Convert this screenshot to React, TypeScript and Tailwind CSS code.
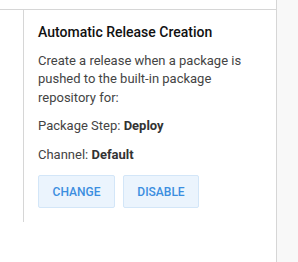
export default function App() {
  return (
    <div className="flex h-[262px] w-[298px] bg-white" style={{ fontFamily: "Roboto, 'Liberation Sans', sans-serif" }}>
      <div className="flex w-[277px] flex-col border-r border-[#d6d6d6]">
        <div className="h-[10px] border-b border-[#d6d6d6]" />
        <div className="flex">
          <div className="w-[23px]" />
          <div className="w-[253px] border-l border-[#d6d6d6] pl-[14px] pr-[24px] pt-[11px] pb-[14px]">
            <h2 className="text-[14px] leading-[22px] font-medium text-[#111]">Automatic Release Creation</h2>
            <p className="mt-[9px] text-[13px] leading-[18.3px] text-[#444]">
              Create a release when a package is pushed to the built-in package repository for:
            </p>
            <p className="mt-[10px] text-[13px] leading-[18.3px] text-[#444]">
              Package Step: <span className="font-bold text-[#333]">Deploy</span>
            </p>
            <p className="mt-[11px] text-[13px] leading-[18.3px] text-[#444]">
              Channel: <span className="font-bold text-[#333]">Default</span>
            </p>
            <div className="mt-[11px] flex gap-[8px]">
              <button className="h-[33px] w-[77px] rounded-[2px] border border-[#d3e6f8] bg-[#ebf4fd] text-[12px] font-medium text-[#3b8ee0]">
                CHANGE
              </button>
              <button className="h-[33px] w-[76px] rounded-[2px] border border-[#d3e6f8] bg-[#ebf4fd] text-[12px] font-medium text-[#3b8ee0]">
                DISABLE
              </button>
            </div>
          </div>
        </div>
      </div>
      <div className="flex-1 bg-[#f8f8f8]" />
    </div>
  );
}
